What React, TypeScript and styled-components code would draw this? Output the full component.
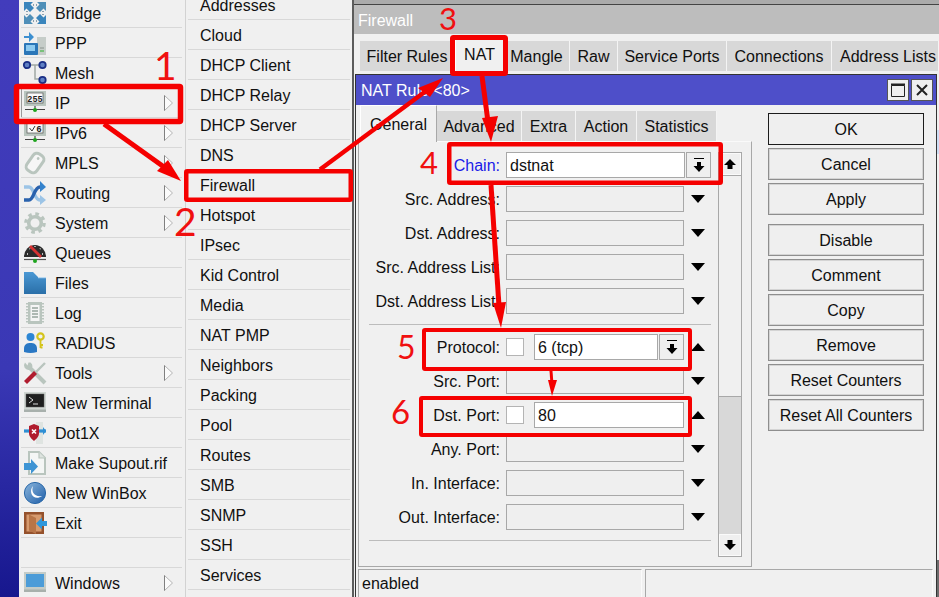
import React from "react";
import styled, { createGlobalStyle } from "styled-components";

const Global = createGlobalStyle`
  html, body { margin: 0; padding: 0; background: #f0f0f0; }
  * { box-sizing: border-box; }
`;

const Root = styled.div`
  position: relative;
  width: 939px;
  height: 597px;
  overflow: hidden;
  display: flex;
  background: #f0f0f0;
  color: #101010;
  font: 16px "Liberation Sans", Arial, sans-serif;
`;
const Strip = styled.div`
  flex: 0 0 19px;
  background: linear-gradient(180deg, #423cbc 0%, #3a38b5 62%, #17178e 100%);
`;
const MainMenu = styled.div`
  flex: 0 0 167px;
  margin-top: -2px;
  padding: 0 3px 0 2px;
  border-right: 1px solid #d2d2d2;
`;
const MenuRow = styled.div<{ $active?: boolean }>`
  height: 30px;
  display: flex;
  align-items: center;
  border-bottom: 1px solid #d8d8d8;
  padding: 0 9px 0 3px;
  ${(p) => p.$active && "box-shadow: inset 1px 0 0 #9a9a9a;"}
`;
const IconBox = styled.span`
  flex: 0 0 22px;
  width: 22px;
  height: 22px;
  margin-right: 9px;
  display: block;
  svg { display: block; overflow: visible; }
`;
const MenuLabel = styled.span`
  flex: 1;
  padding-top: 2px;
  white-space: nowrap;
`;
const SubMenu = styled.div`
  flex: 0 0 166px;
  margin-top: -10px;
  padding: 0 2px;
`;
const SubRow = styled.div`
  height: 30px;
  display: flex;
  align-items: center;
  padding: 2px 0 0 12px;
  border-bottom: 1px solid #d8d8d8;
`;
const Firewall = styled.div`
  flex: 1;
  min-width: 0;
  display: flex;
  flex-direction: column;
  border-left: 2px solid #5c5c5c;
`;
const TopEdge = styled.div`
  height: 5px;
  flex: none;
  background: #ababab;
  border-bottom: 1px solid #444;
`;
const FirewallTitle = styled.div`
  height: 29px;
  flex: none;
  background: #bdbdbd;
  color: #fff;
  padding: 2px 0 0 4px;
  display: flex;
  align-items: center;
`;
const FirewallTabs = styled.div`
  display: flex;
  align-items: flex-end;
  height: 37px;
  flex: none;
  padding-left: 6px;
  white-space: nowrap;
`;
const Tab = styled.div<{ $w: number; $on?: boolean; $pad?: number }>`
  flex: 0 0 ${(p) => p.$w}px;
  height: ${(p) => (p.$on ? 35 : 30)}px;
  display: flex;
  align-items: center;
  justify-content: center;
  padding-top: ${(p) => (p.$on ? 3 : 2)}px;
  padding-left: ${(p) => p.$pad ?? 0}px;
  background: ${(p) => (p.$on ? "#f0f0f0" : "#d8d8d8")};
  border-right: 1px solid #f4f4f4;
  ${(p) => p.$on && "border-left: 1px solid #fff;"}
`;
const NatWindow = styled.div`
  flex: 1;
  min-height: 0;
  margin: 3px 0 0 1px;
  width: 582px;
  display: flex;
  flex-direction: column;
  border: 1px solid #333;
  border-bottom: 0;
  background: #f0f0f0;
`;
const WindowTitle = styled.div`
  flex: none;
  height: 30px;
  background: #4e4fc9;
  color: #fff;
  display: flex;
  align-items: center;
  padding: 0 3px 0 5px;
`;
const TitleText = styled.span`
  flex: 1;
  padding-top: 2px;
`;
const TitleButton = styled.div`
  width: 22px;
  height: 22px;
  margin-left: 2px;
  background: #efefef;
  border: 1px solid #555;
  display: flex;
  align-items: center;
  justify-content: center;
`;
const WindowBody = styled.div`
  flex: 1;
  min-height: 0;
  display: flex;
  padding-left: 2px;
`;
const LeftColumn = styled.div`
  flex: 0 0 394px;
  display: flex;
  flex-direction: column;
`;
const InnerTabs = styled.div`
  height: 36px;
  flex: none;
  display: flex;
  align-items: flex-end;
  padding-left: 2px;
  white-space: nowrap;
  position: relative;
  z-index: 1;
`;
const InnerTab = styled.div<{ $w: number; $on?: boolean }>`
  flex: 0 0 ${(p) => p.$w}px;
  height: ${(p) => (p.$on ? 36 : 30)}px;
  display: flex;
  align-items: center;
  justify-content: center;
  padding-top: 2px;
  background: ${(p) => (p.$on ? "#f0f0f0" : "#d8d8d8")};
  border-right: 1px solid ${(p) => (p.$on ? "#a8a8a8" : "#f4f4f4")};
  ${(p) => p.$on && "border-left: 1px solid #fff; border-top: 1px solid #fff; margin-bottom: -1px; height: 37px;"}
`;
const Panel = styled.div`
  height: 426px;
  flex: none;
  display: flex;
  align-items: flex-start;
  padding: 10px 9px 0 10px;
  border: 1px solid #a8a8a8;
  border-top-color: #fafafa;
`;
const Form = styled.div`
  flex: 0 0 342px;
  display: flex;
  flex-direction: column;
  gap: 8px;
`;
const Row = styled.div`
  height: 26px;
  display: flex;
  align-items: center;
`;
const Label = styled.div<{ $link?: boolean }>`
  flex: 0 0 132px;
  margin-right: 5px;
  padding: 2px 1px 0 0;
  text-align: right;
  white-space: nowrap;
  color: ${(p) => (p.$link ? "#1a1ae8" : "#101010")};
`;
const Field = styled.div<{ $w: number; $filled?: boolean }>`
  flex: 0 0 ${(p) => p.$w}px;
  height: 26px;
  padding: 2px 0 0 3px;
  display: flex;
  align-items: center;
  background: ${(p) => (p.$filled ? "#fff" : "#efefef")};
  border: 1px solid #a8a8a8;
`;
const Check = styled.div`
  flex: 0 0 18px;
  height: 18px;
  margin-right: 10px;
  background: #fff;
  border: 1px solid #b4b4b4;
`;
const DropButton = styled.div`
  flex: 0 0 25px;
  height: 26px;
  margin-left: 1px;
  background: #efefef;
  border: 1px solid #a8a8a8;
  display: flex;
  align-items: center;
  justify-content: center;
`;
const ArrowCell = styled.div`
  flex: 0 0 27px;
  display: flex;
  justify-content: center;
`;
const Triangle = styled.div<{ $up?: boolean }>`
  width: 0;
  height: 0;
  border-left: 7px solid transparent;
  border-right: 7px solid transparent;
  ${(p) => (p.$up ? "border-bottom: 8px solid #000;" : "border-top: 8px solid #000;")}
`;
const Divider = styled.div`
  height: 1px;
  background: #bcbcbc;
  margin: 2px 0 1px;
`;
const ScrollBar = styled.div`
  flex: 0 0 24px;
  margin-left: 7px;
  height: 405px;
  display: flex;
  flex-direction: column;
  border: 1px solid #a8a8a8;
`;
const ScrollButton = styled.div`
  flex: 0 0 22px;
  background: #efefef;
  box-shadow: inset 0 0 0 1px #fafafa;
  display: flex;
  align-items: center;
  justify-content: center;
`;
const ScrollTrack = styled.div`
  flex: 0 0 222px;
  border-top: 1px solid #a8a8a8;
  border-bottom: 1px solid #a8a8a8;
`;
const ScrollThumb = styled.div`
  flex: 1;
  background: #d8d8d8;
`;
const ActionColumn = styled.div`
  flex: 0 0 156px;
  margin-left: 16px;
  padding-top: 8px;
  display: flex;
  flex-direction: column;
  gap: 3px;
`;
const ActionButton = styled.div<{ $primary?: boolean; $split?: boolean }>`
  height: 32px;
  flex: none;
  display: flex;
  align-items: center;
  justify-content: center;
  padding-top: 2px;
  background: #efefef;
  border: 1px solid ${(p) => (p.$primary ? "#1c1c1c" : "#8e8e8e")};
  box-shadow: inset 0 0 0 1px ${(p) => (p.$primary ? "#efefef" : "#d4d4d4")};
  ${(p) => p.$split && "margin-top: 6px;"}
`;
const StatusBar = styled.div`
  flex: none;
  height: 30px;
  display: flex;
  gap: 3px;
  padding: 2px 0 0 2px;
`;
const StatusCell = styled.div<{ $w: number }>`
  flex: 0 0 ${(p) => p.$w}px;
  padding: 5px 0 0 3px;
  border-top: 1px solid #a8a8a8;
  border-left: 1px solid #a8a8a8;
  border-right: 1px solid #fafafa;
`;
const EdgeSliver = styled.div<{ $top: number; $h: number; $c: string }>`
  position: absolute;
  right: 0;
  top: ${(p) => p.$top}px;
  width: 2px;
  height: ${(p) => p.$h}px;
  background: ${(p) => p.$c};
`;
const Overlay = styled.svg`
  position: absolute;
  left: 0;
  top: 0;
  z-index: 2;
  width: 939px;
  height: 597px;
  pointer-events: none;
`;
const Number = styled.span<{ $x: number; $y: number; $size: number }>`
  position: absolute;
  z-index: 3;
  left: ${(p) => p.$x}px;
  top: ${(p) => p.$y}px;
  font: 400 ${(p) => p.$size}px/1 Lato, "Open Sans", sans-serif;
  color: #f01010;
`;

const Svg = ({ children }: { children: React.ReactNode }) => (
  <svg width="22" height="22" viewBox="0 0 22 22">{children}</svg>
);
const G = "#b9c5be";

const Stand = ({ y = 15 }: { y?: number }) => (
  <>
    <path d={`M11 ${y}v4M1 ${y + 3.5}h20`} stroke="#444" strokeWidth="1.2" />
    <circle cx="11" cy={y + 4} r="2" fill="#1fa51f" />
  </>
);

const icons: Record<string, React.ReactNode> = {
  Bridge: (
    <Svg>
      {[
        "",
        "translate(22 0) scale(-1 1)",
        "translate(0 22) scale(1 -1)",
        "translate(22 22) scale(-1 -1)",
      ].map((t, i) => (
        <g key={i} transform={t}>
          <path d="M0 0h9L6.5 2.5 10 6 6 10 2.5 6.5 0 9z" fill={i % 3 === 0 ? "#3a85bc" : "#4f8fb8"} />
          <path d="M3 9v1M9 3h1" stroke="#8aa0ae" strokeWidth="2" />
        </g>
      ))}
    </Svg>
  ),
  PPP: (
    <Svg>
      <rect x="13" y="5" width="9" height="18" fill="#c6cdc9" />
      <path d="M16 16h4" stroke="#8a938e" />
      <path d="M16 19h4" stroke="#2cb52c" />
      <rect x="0" y="11" width="14" height="12" rx="1" fill="#2a76b8" />
      <rect x="2" y="13" width="9" height="6" fill="#8ccaf0" />
      <path d="M0 4h5V0l5 5-5 5V6H0z" fill="#3c8fd0" />
    </Svg>
  ),
  Mesh: (
    <Svg>
      <path d="M5 3h12M11 3v14h6" stroke="#a0a8a4" strokeWidth="1.5" fill="none" />
      {[[3, 3], [18.5, 3], [18.5, 18]].map(([x, y]) => (
        <circle key={x + "" + y} cx={x} cy={y} r="3.2" fill="#5f80c4" stroke="#1a2f86" strokeWidth="1.8" />
      ))}
    </Svg>
  ),
  IP: (
    <Svg>
      <rect y="-1" width="22" height="15" fill={G} />
      <rect x="3" y="1" width="16" height="10" fill="#fafafa" stroke="#555" strokeWidth=".7" />
      <text x="11" y="9.6" textAnchor="middle" fontFamily="Liberation Mono, monospace" fontSize="8.5" fontWeight="700" fill="#222">255</text>
      <Stand y={14} />
    </Svg>
  ),
  IPv6: (
    <Svg>
      <rect y="-1" width="22" height="15" fill={G} />
      <rect x="3" y="1" width="16" height="10" fill="#fafafa" stroke="#555" strokeWidth=".7" />
      <path d="M5.5 6l2.5 3 3-5" stroke="#333" fill="none" />
      <text x="15" y="9.5" textAnchor="middle" fontFamily="Liberation Sans, sans-serif" fontSize="9" fontWeight="700" fill="#222">6</text>
      <Stand y={14} />
    </Svg>
  ),
  MPLS: (
    <Svg>
      <g transform="rotate(35 11 11)">
        <rect x="5" y="1" width="12" height="20" rx="4.5" fill="#f6f6f6" stroke={G} strokeWidth="3" />
        <circle cx="11" cy="5.5" r="1.4" fill={G} />
      </g>
    </Svg>
  ),
  Routing: (
    <Svg>
      <path d="M0 5h5c5 0 5 13 11 13" stroke="#9cc4e6" strokeWidth="3.4" fill="none" />
      <path d="M16 13l6 5-6 5z" fill="#9cc4e6" />
      <path d="M0 18h5c5 0 5-13 11-13" stroke="#2a62ad" strokeWidth="3.4" fill="none" />
      <path d="M16 -1l6 6-6 5z" fill="#3482cc" />
    </Svg>
  ),
  System: (
    <Svg>
      <circle cx="11" cy="11" r="9.2" fill="none" stroke={G} strokeWidth="3.2" strokeDasharray="3.6 3.63" />
      <circle cx="11" cy="11" r="6.3" fill="none" stroke={G} strokeWidth="3.6" />
    </Svg>
  ),
  Queues: (
    <Svg>
      <path d="M0 15a11 12 0 0 1 22 0z" fill="#2b2b2b" />
      <path d="M3 12h1M5.5 6.5l.6.6M11 4v1M16.5 6.5l-.6.6M19 12h-1" stroke="#eee" strokeWidth="1.3" />
      <path d="M6 4l11 11" stroke="#d63232" strokeWidth="2.8" />
      <path d="M0 17.5h22" stroke="#555" strokeWidth="1.2" />
      <circle cx="11" cy="19" r="2" fill="#1fa51f" />
    </Svg>
  ),
  Files: (
    <Svg>
      <defs>
        <linearGradient id="fold" x1="0" y1="0" x2="0" y2="1">
          <stop offset="0" stopColor="#4a98d4" />
          <stop offset="1" stopColor="#2a6fa8" />
        </linearGradient>
      </defs>
      <path d="M0 0h9l5 5h8v17H0z" fill="url(#fold)" />
      <path d="M14 5h8v1.2h-8z" fill="#b8d8f0" />
    </Svg>
  ),
  Log: (
    <Svg>
      <rect x="4" y="0" width="14" height="22" fill={G} />
      <path d="M3 1v20M19 1v20" stroke={G} strokeWidth="2" strokeDasharray="1.5 1.5" />
      <rect x="6.5" y="3" width="9" height="16" fill="#f5f5f5" />
      <path d="M8 6h6M8 9h6M8 12h6M8 15h6" stroke="#96a59d" strokeWidth="1.4" />
    </Svg>
  ),
  RADIUS: (
    <Svg>
      <circle cx="6.500" cy="5" r="4" fill="#2c86d4" />
      <path d="M0 20v-3c0-5 3-6 6.500-6s6.500 1 6.500 6v3q-6.500 2-13 0z" fill="#2a78c4" />
      <circle cx="16.500" cy="4.500" r="3.200" fill="none" stroke="#d4c41c" strokeWidth="2.200" />
      <path d="M16.500 8v8M16.500 13h2.500M16.500 15.500h2" stroke="#d4c41c" strokeWidth="1.800" />
    </Svg>
  ),
  Tools: (
    <Svg>
      <path d="M5 5l16 16" stroke={G} strokeWidth="4" />
      <path d="M1 0.500a5 5 0 0 0-.5 5 5 5 0 0 0 6 2l2-3a5 5 0 0 0-2-4 5 5 0 0 0-2 0l-1 3z" fill={G} />
      <path d="M11.500 10.500L21 1" stroke={G} strokeWidth="2.400" />
      <path d="M1.500 20.500l10-10" stroke="#b01c2e" strokeWidth="4.200" />
    </Svg>
  ),
  "New Terminal": (
    <Svg>
      <rect y="0" width="22" height="19" fill="#d0d6d2" />
      <rect x="2" y="2" width="18" height="13" fill="#1f1f1f" stroke="#555" strokeWidth=".5" />
      <path d="M5 5l4 3-4 3M9 12h5" stroke="#f0f0f0" fill="none" strokeWidth=".9" />
      <rect y="17.500" width="22" height="2.500" fill="#a8b0ac" />
    </Svg>
  ),
  "Dot1X": (
    <Svg>
      <path d="M12 0h7v22h-7z" fill="#dfe4e1" />
      <path d="M0 9h22" stroke="#2f8fd4" strokeWidth="3.200" />
      <path d="M19 5l3 4-3 4z" fill="#2f8fd4" />
      <path d="M5 4l5-2 5 2v7c0 4-3 6-5 8-2-2-5-4-5-8z" fill="#b01c2e" />
      <path d="M8 7.500l4 4M12 7.500l-4 4" stroke="#fff" strokeWidth="1.600" />
    </Svg>
  ),
  "Make Supout.rif": (
    <Svg>
      <path d="M5 0h10l6 6v16H5z" fill="#f4f6f5" stroke={G} strokeWidth="2" />
      <path d="M15 0v6h6" fill="#dde3df" stroke={G} strokeWidth="1.200" />
      <path d="M0 11h7V7l7 7.500L7 22v-4H0z" fill="#3e94d4" />
    </Svg>
  ),
  "New WinBox": (
    <Svg>
      <defs>
        <linearGradient id="wb" x1="0" y1="0" x2="1" y2="1">
          <stop offset="0" stopColor="#8cb6dc" />
          <stop offset="1" stopColor="#1e5ea8" />
        </linearGradient>
      </defs>
      <circle cx="11" cy="11" r="10.600" fill="url(#wb)" stroke="#2a68a8" />
      <path d="M9 4c-2 6 1 11 9 10-4 3-9 2-10.500-2C6.500 9 7 6 9 4z" fill="#fff" />
    </Svg>
  ),
  Exit: (
    <Svg>
      <rect width="20" height="22" fill="#94512c" />
      <rect x="2.500" y="2.500" width="15" height="17" fill="#d69a6e" />
      <path d="M5 2.500l7 3.500v16l-7-3.500z" fill="#b87548" />
      <path d="M23 9h-5V5.500l-6 6 6 6V14h5z" fill="#2f98dc" />
    </Svg>
  ),
  Windows: (
    <Svg>
      <rect y="0" width="22" height="19" fill="#c4ccc8" />
      <rect x="2" y="2" width="18" height="13" fill="#4c9cd8" />
      <rect y="17.500" width="22" height="2.500" fill="#a8b0ac" />
    </Svg>
  ),
};

const SubArrow = () => (
  <svg width="9" height="16" viewBox="0 0 9 16">
    <path d="M.5.5L8.500 8 .5 15.500z" fill="#fbfbfb" stroke="#b4b4b4" />
    <path d="M.5.5v15" stroke="#808080" />
  </svg>
);
const DropIcon = () => (
  <svg width="12" height="15" viewBox="0 0 12 15">
    <path d="M1 .5h10" stroke="#000" />
    <path d="M4 4h4v4h3.500L6 14 .5 8H4z" fill="#000" />
  </svg>
);
const ScrollArrow = ({ up }: { up?: boolean }) => (
  <svg width="12" height="10" viewBox="0 0 12 10">
    <path d={up ? "M6 0l6 6H8.500v4h-5V6H0z" : "M6 10l6-6H8.500V0h-5v4H0z"} fill="#000" />
  </svg>
);

const menu: { name: string; sub?: boolean }[] = [
  { name: "Bridge" }, { name: "PPP" }, { name: "Mesh" }, { name: "IP", sub: true },
  { name: "IPv6", sub: true }, { name: "MPLS", sub: true }, { name: "Routing", sub: true },
  { name: "System", sub: true }, { name: "Queues" }, { name: "Files" }, { name: "Log" },
  { name: "RADIUS" }, { name: "Tools", sub: true }, { name: "New Terminal" }, { name: "Dot1X" },
  { name: "Make Supout.rif" }, { name: "New WinBox" }, { name: "Exit" }, { name: "" },
  { name: "Windows", sub: true },
];
const subs = ["Addresses", "Cloud", "DHCP Client", "DHCP Relay", "DHCP Server", "DNS", "Firewall", "Hotspot", "IPsec", "Kid Control", "Media", "NAT PMP", "Neighbors", "Packing", "Pool", "Routes", "SMB", "SNMP", "SSH", "Services"];
const topTabs: [string, number, number?][] = [["Filter Rules", 95], ["NAT", 49], ["Mangle", 66], ["Raw", 48], ["Service Ports", 109], ["Connections", 105], ["Address Lists", 107, 6]];
const ruleTabs: [string, number][] = [["General", 77], ["Advanced", 85], ["Extra", 54], ["Action", 61], ["Statistics", 80]];
const actions: [string, boolean?, boolean?][] = [["OK", true], ["Cancel"], ["Apply"], ["Disable", false, true], ["Comment"], ["Copy"], ["Remove"], ["Reset Counters"], ["Reset All Counters"]];

const EmptyRow = ({ label }: { label: string }) => (
  <Row>
    <Label>{label}</Label>
    <Field $w={178} />
    <ArrowCell><Triangle /></ArrowCell>
  </Row>
);

export default function App() {
  return (
    <Root>
      <Global />
      <Strip />
      <MainMenu>
        {menu.map((m, i) => (
          <MenuRow key={i} $active={m.name === "IP"}>
            {m.name && <IconBox>{icons[m.name]}</IconBox>}
            <MenuLabel>{m.name}</MenuLabel>
            {m.sub && <SubArrow />}
          </MenuRow>
        ))}
      </MainMenu>
      <SubMenu>
        {subs.map((s) => <SubRow key={s}>{s}</SubRow>)}
      </SubMenu>
      <Firewall>
        <TopEdge />
        <FirewallTitle>Firewall</FirewallTitle>
        <FirewallTabs>
          {topTabs.map(([t, w, pad]) => <Tab key={t} $w={w} $pad={pad} $on={t === "NAT"}>{t}</Tab>)}
        </FirewallTabs>
        <NatWindow>
          <WindowTitle>
            <TitleText>NAT Rule &lt;80&gt;</TitleText>
            <TitleButton>
              <svg width="14" height="14" viewBox="0 0 14 14"><path d="M.5 2.500h13v11H.5z" fill="none" stroke="#222" /><path d="M0 1.500h14" stroke="#222" strokeWidth="2" /></svg>
            </TitleButton>
            <TitleButton>
              <svg width="12" height="12" viewBox="0 0 12 12"><path d="M1 1l10 10M11 1L1 11" stroke="#222" strokeWidth="2" /></svg>
            </TitleButton>
          </WindowTitle>
          <WindowBody>
            <LeftColumn>
              <InnerTabs>
                {ruleTabs.map(([t, w]) => <InnerTab key={t} $w={w} $on={t === "General"}>{t}</InnerTab>)}
              </InnerTabs>
              <Panel>
                <Form>
                  <Row>
                    <Label $link>Chain:</Label>
                    <Field $w={179} $filled>dstnat</Field>
                    <DropButton><DropIcon /></DropButton>
                  </Row>
                  <EmptyRow label="Src. Address:" />
                  <EmptyRow label="Dst. Address:" />
                  <EmptyRow label="Src. Address List:" />
                  <EmptyRow label="Dst. Address List:" />
                  <Divider />
                  <Row>
                    <Label>Protocol:</Label>
                    <Check />
                    <Field $w={124} $filled>6 (tcp)</Field>
                    <DropButton><DropIcon /></DropButton>
                    <ArrowCell><Triangle $up /></ArrowCell>
                  </Row>
                  <EmptyRow label="Src. Port:" />
                  <Row>
                    <Label>Dst. Port:</Label>
                    <Check />
                    <Field $w={150} $filled>80</Field>
                    <ArrowCell><Triangle $up /></ArrowCell>
                  </Row>
                  <EmptyRow label="Any. Port:" />
                  <EmptyRow label="In. Interface:" />
                  <EmptyRow label="Out. Interface:" />
                  <Divider />
                </Form>
                <ScrollBar>
                  <ScrollButton><ScrollArrow up /></ScrollButton>
                  <ScrollTrack />
                  <ScrollThumb />
                  <ScrollButton><ScrollArrow /></ScrollButton>
                </ScrollBar>
              </Panel>
            </LeftColumn>
            <ActionColumn>
              {actions.map(([t, primary, split]) => (
                <ActionButton key={t} $primary={primary} $split={split}>{t}</ActionButton>
              ))}
            </ActionColumn>
          </WindowBody>
          <StatusBar>
            <StatusCell $w={284}>enabled</StatusCell>
            <StatusCell $w={288} />
          </StatusBar>
        </NatWindow>
      </Firewall>
      <EdgeSliver $top={130} $h={24} $c="#cdddf4" />
      <EdgeSliver $top={560} $h={37} $c="#6c6c6c" />
      <Overlay viewBox="0 0 939 597">
        <g fill="none" stroke="#f50000">
          <rect x="16.500" y="86.500" width="164" height="35" rx="1" strokeWidth="5.500" />
          <rect x="186.250" y="171.250" width="164.500" height="28.500" rx="1" strokeWidth="4.500" />
          <rect x="452.500" y="37.500" width="53" height="36" rx="1" strokeWidth="5" />
          <rect x="449.250" y="144.250" width="271.500" height="38.500" rx="1" strokeWidth="4.500" />
          <rect x="424" y="330" width="266" height="39" rx="1" strokeWidth="4" />
          <rect x="421" y="398" width="269" height="37" rx="1" strokeWidth="4" />
          <path d="M104 124L164 167" strokeWidth="5" />
          <path d="M320 169.500L430 88" strokeWidth="4.500" />
          <path d="M482 76L488 122" strokeWidth="5" />
          <path d="M491 185L499 306" strokeWidth="5" />
          <path d="M551 371L552 384" strokeWidth="3" />
        </g>
        <g fill="#f50000">
          <path d="M168 160L181 181 157 171z" />
          <path d="M443 78L418 88 430 97z" />
          <path d="M491 142L482 118 498 116z" />
          <path d="M501 328L493 303 506 302z" />
          <path d="M552 396L548 380 557 380z" />
        </g>
      </Overlay>
      <Number $x={154} $y={46} $size={39}>1</Number>
      <Number $x={174} $y={202} $size={39}>2</Number>
      <Number $x={439} $y={3} $size={31}>3</Number>
      <Number $x={420} $y={147} $size={31}>4</Number>
      <Number $x={397} $y={331} $size={32}>5</Number>
      <Number $x={391} $y={395} $size={33}>6</Number>
    </Root>
  );
}
